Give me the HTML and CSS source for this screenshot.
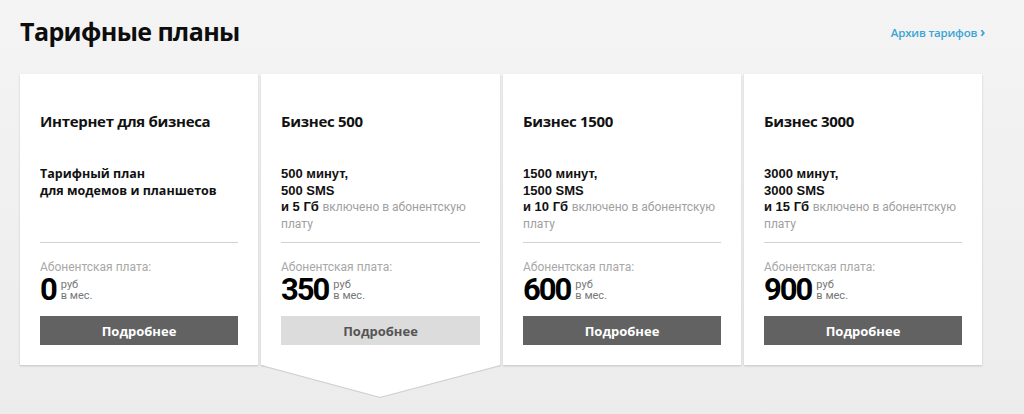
FILE: index.html
```html
<!DOCTYPE html>
<html lang="ru">
<head>
<meta charset="utf-8">
<link rel="stylesheet" href="styles.css">
</head>
<body>
<div class="page">
  <header class="head">
    <h1 class="title">Тарифные планы</h1>
    <a class="archive" href="#">Архив тарифов <span class="chev">›</span></a>
  </header>
  <div class="cards">
    <div class="card">
      <h2 class="card-title">Интернет для бизнеса</h2>
      <div class="desc desc-plain"><b>Тарифный план<br>для модемов и планшетов</b></div>
      <div class="fee">
        <div class="fee-label">Абонентская плата:</div>
        <div class="price"><span class="num">0</span><span class="unit">руб<br>в мес.</span></div>
        <a class="btn" href="#">Подробнее</a>
      </div>
    </div>
    <div class="card active">
      <h2 class="card-title">Бизнес 500</h2>
      <div class="desc"><b>500 минут,<br>500 SMS<br>и 5 Гб</b> <span class="muted">включено в абонентскую плату</span></div>
      <div class="fee">
        <div class="fee-label">Абонентская плата:</div>
        <div class="price"><span class="num">350</span><span class="unit">руб<br>в мес.</span></div>
        <a class="btn" href="#">Подробнее</a>
      </div>
      <svg class="pointer" width="240" height="34" viewBox="0 0 240 34"><path d="M0 0 L119 32 L240 0 Z" fill="#fff"/><path d="M0 0.5 L119 32.5 L240 0.5" fill="none" stroke="#cfcfcf" stroke-width="1.2"/></svg>
    </div>
    <div class="card">
      <h2 class="card-title">Бизнес 1500</h2>
      <div class="desc"><b>1500 минут,<br>1500 SMS<br>и 10 Гб</b> <span class="muted">включено в абонентскую плату</span></div>
      <div class="fee">
        <div class="fee-label">Абонентская плата:</div>
        <div class="price"><span class="num">600</span><span class="unit">руб<br>в мес.</span></div>
        <a class="btn" href="#">Подробнее</a>
      </div>
    </div>
    <div class="card">
      <h2 class="card-title">Бизнес 3000</h2>
      <div class="desc"><b>3000 минут,<br>3000 SMS<br>и 15 Гб</b> <span class="muted">включено в абонентскую плату</span></div>
      <div class="fee">
        <div class="fee-label">Абонентская плата:</div>
        <div class="price"><span class="num">900</span><span class="unit">руб<br>в мес.</span></div>
        <a class="btn" href="#">Подробнее</a>
      </div>
    </div>
  </div>
</div>
</body>
</html>
```
FILE: styles.css
```css
* { box-sizing: border-box; }
html, body { margin: 0; padding: 0; }
body {
  background: linear-gradient(#f4f4f4, #ececec);
  height: 414px;
  overflow: hidden;
  font-family: "Liberation Sans", Arial, sans-serif;
  color: #111;
}
.page { padding: 0 20px; }
.head {
  display: flex;
  justify-content: space-between;
  align-items: center;
  height: 62px;
}
.title {
  margin: 0;
  font-family: "Open Sans", sans-serif;
  font-weight: 700;
  font-size: 25px;
  letter-spacing: -0.6px;
  color: #0d0d0d;
}
.archive {
  font-family: "Open Sans", sans-serif;
  font-size: 11.5px;
  font-weight: 600;
  color: #3ba5d3;
  text-decoration: none;
  margin-right: 19px;
  letter-spacing: -0.2px;
}
.chev { font-weight: 700; font-size: 14px; }
.cards {
  display: flex;
  gap: 3px;
  margin-top: 12px;
}
.card {
  position: relative;
  width: 238px;
  height: 291px;
  background: #fff;
  box-shadow: 0 1px 2px rgba(0,0,0,0.18);
  padding: 0 20px;
  display: flex;
  flex-direction: column;
}
.card.active { width: 239px; }
.card-title {
  margin: 37px 0 0;
  font-family: "Open Sans", sans-serif;
  font-weight: 700;
  font-size: 15px;
  letter-spacing: -0.3px;
  line-height: 20px;
  color: #111;
}
.desc {
  margin-top: 35px;
  font-size: 13px;
  line-height: 16.5px;
  color: #111;
  height: 77px;
  border-bottom: 1px solid #d2d2d2;
}
.desc b { font-family: "Liberation Sans", Arial, sans-serif; font-size: 13px; }
.desc-plain b { font-family: "Open Sans", sans-serif; font-size: 12.5px; }
.muted {
  font-family: Roboto, sans-serif;
  font-size: 12px;
  line-height: 16.5px;
  color: #a0a0a0;
  font-weight: 400;
}
.fee { margin-top: 17px; }
.fee-label {
  font-family: Roboto, sans-serif;
  font-size: 12px;
  color: #a8a8a8;
  line-height: 14px;
}
.price {
  display: flex;
  align-items: center;
  height: 31px;
}
.num {
  font-family: Roboto, sans-serif;
  font-weight: 700;
  font-size: 31px;
  letter-spacing: -2px;
  line-height: 31px;
  color: #000;
}
.unit {
  font-family: Roboto, sans-serif;
  font-size: 11px;
  line-height: 11px;
  color: #777;
  margin-left: 5px;
  margin-top: 1px;
}
.btn {
  display: flex;
  align-items: center;
  justify-content: center;
  margin-top: 11px;
  height: 29px;
  background: #626262;
  color: #fff;
  font-family: "Open Sans", sans-serif;
  font-weight: 700;
  font-size: 13px;
  text-decoration: none;
}
.active .btn { background: #dcdcdc; color: #555; }
.pointer {
  position: absolute;
  left: 0;
  top: 291px;
  display: block;
}
```
